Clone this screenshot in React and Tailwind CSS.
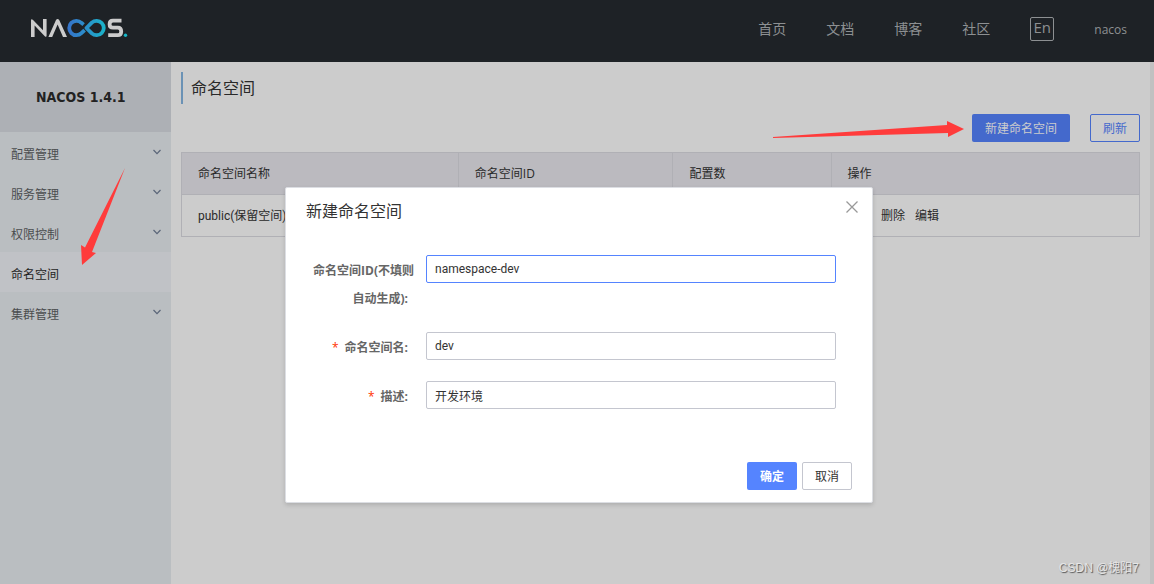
import React from "react";

const menu = [
  { label: "配置管理", expandable: true },
  { label: "服务管理", expandable: true },
  { label: "权限控制", expandable: true },
  { label: "命名空间", expandable: false },
  { label: "集群管理", expandable: true },
];

const fields = [
  { id: "ns-name", label: "命名空间名:", value: "dev" },
  { id: "ns-desc", label: "描述:", value: "开发环境" },
];

function Logo() {
  return (
    <svg viewBox="0 0 98 20" className="h-5 w-[98px]" fill="none" role="img" aria-label="NACOS">
      <defs>
        <linearGradient id="loop" x1="37" y1="0" x2="77" y2="0" gradientUnits="userSpaceOnUse">
          <stop offset="0" stopColor="#3672c9" />
          <stop offset="0.5" stopColor="#2a92cb" />
          <stop offset="1" stopColor="#18b7c8" />
        </linearGradient>
      </defs>
      <path fill="#cccccc" d="M1 19V2.4Q1 0.4 2.8 1.8L13 12.2V1H16.6V17.4Q16.6 19.6 14.8 18.2L4.6 7.6V19Z" />
      <path fill="#cccccc" d="M18.4 19L26 2Q27.6 0 29.2 2L37 19H33L27.6 6.4L22.2 19Z" />
      <path
        d="M91.5 2.7H83Q79.6 2.7 79.6 6.2Q79.6 9.6 83 9.6H87.8Q91.2 9.6 91.2 13.4Q91.2 17.2 87.8 17.2H78.2"
        stroke="#cccccc"
        strokeWidth="3.8"
      />
      <path
        d="M53.6 6.6L51.4 4.8A7.2 7.2 0 1 0 51.4 15.2L54.6 12.2M56.4 10L61.8 4.6A7.2 7.2 0 1 1 61.8 15.4Z"
        stroke="url(#loop)"
        strokeWidth="3.8"
        strokeLinejoin="round"
      />
      <circle cx="95.5" cy="17.3" r="1.7" fill="#18b7c8" />
    </svg>
  );
}

function Chevron() {
  return (
    <svg viewBox="0 0 8 6" className="h-1.5 w-2" fill="none" stroke="#5a6578" strokeWidth="1.2" aria-hidden="true">
      <path d="M0.5 1L4 4.6L7.5 1" />
    </svg>
  );
}

function Header() {
  return (
    <header className="flex h-[62px] items-center justify-between bg-[#1e2226] pr-[27px] pb-1 pl-[30px]">
      <a href="#home" className="pb-0.5">
        <Logo />
      </a>
      <nav className="flex items-center gap-10 text-sm leading-5 text-[#8d9092]">
        <a href="#index">首页</a>
        <a href="#docs">文档</a>
        <a href="#blog">博客</a>
        <a href="#community">社区</a>
        <button className="flex h-6 w-6 items-center justify-center rounded-xs border border-[#8d9092] pb-1 text-[15px] leading-5">
          En
        </button>
        <a href="#user" className="pt-0.5 text-xs">
          nacos
        </a>
      </nav>
    </header>
  );
}

function Sidebar() {
  return (
    <aside className="w-[171px] shrink-0 bg-[#babec1]">
      <h1 className="flex h-[70px] items-center bg-[#adb0b5] pl-9 font-['DejaVu_Sans_Condensed','DejaVu_Sans',sans-serif] text-sm font-bold text-[#222222]">
        NACOS 1.4.1
      </h1>
      <ul>
        {menu.map((item) => (
          <li key={item.label}>
            <a
              href="#menu"
              className={
                item.expandable
                  ? "flex h-10 items-center justify-between pt-1.5 pr-2.5 pl-[11px] text-[#4b4d4f]"
                  : "flex h-10 items-center bg-[#c0c2c6] pt-1.5 pr-2.5 pl-[11px] text-[#1f1f1f]"
              }
            >
              {item.label}
              {item.expandable && (
                <span className="pb-1.5">
                  <Chevron />
                </span>
              )}
            </a>
          </li>
        ))}
      </ul>
    </aside>
  );
}

function NamespacePage() {
  return (
    <main className="min-w-0 flex-1 pt-2.5 pr-2.5 pl-2.5 text-[#292929]">
      <h2 className="flex h-8 items-center border-l-2 border-[#6b92b5] pl-2 text-base">命名空间</h2>
      <div className="mt-2.5 mb-2.5 flex justify-end gap-5">
        <button className="h-7 rounded-xs bg-[#4469cc] px-[13px] pt-0.5 text-[#cccccc]">新建命名空间</button>
        <button className="h-7 rounded-xs border border-[#4469cc] px-3 pt-0.5 text-[#4469cc]">刷新</button>
      </div>
      <table className="w-full table-fixed border-collapse border border-[#b0b0b5] text-left">
        <colgroup>
          <col className="w-[28.9%]" />
          <col className="w-[22.4%]" />
          <col className="w-[16.5%]" />
          <col />
        </colgroup>
        <thead>
          <tr className="h-[42px] bg-[#bbbabf]">
            {["命名空间名称", "命名空间ID", "配置数", "操作"].map((title) => (
              <th key={title} className="border border-[#b0b0b5] px-4 font-normal">
                {title}
              </th>
            ))}
          </tr>
        </thead>
        <tbody>
          <tr className="h-[42px] font-[Roboto,'Noto_Sans_CJK_SC',sans-serif]">
            <td className="px-4">public(保留空间)</td>
            <td className="px-4" />
            <td className="px-4">0</td>
            <td className="px-4">
              <div className="flex gap-2.5">
                <a href="#detail">详情</a>
                <a href="#delete">删除</a>
                <a href="#edit">编辑</a>
              </div>
            </td>
          </tr>
        </tbody>
      </table>
    </main>
  );
}

function NamespaceDialog() {
  const labelClass = "w-[108px] shrink-0 pt-0.5 text-right leading-7 font-bold text-[#666666]";
  const inputClass =
    "h-7 min-w-0 flex-1 rounded-xs border bg-white px-2 font-[Roboto,'Noto_Sans_CJK_SC',sans-serif] text-[#333333] outline-none";
  return (
    <section
      role="dialog"
      aria-labelledby="dialog-title"
      className="absolute top-[187px] left-1/2 w-[588px] -translate-x-[292px] rounded-xs border border-[#dcdee3] bg-white shadow-[0_2px_4px_rgba(0,0,0,0.15)]"
    >
      <div className="flex items-center justify-between pt-[11px] pr-3.5 pl-5">
        <h2 id="dialog-title" className="text-base leading-6 text-[#333333]">
          新建命名空间
        </h2>
        <button aria-label="关闭" className="pb-2">
          <svg viewBox="0 0 12 12" className="h-3 w-3" stroke="#999999" strokeWidth="1.3" fill="none">
            <path d="M0.5 0.5L11.5 11.5M11.5 0.5L0.5 11.5" />
          </svg>
        </button>
      </div>
      <form className="flex flex-col gap-[21px] pt-8 pr-9 pl-5">
        <div className="flex h-14 items-start gap-3">
          <label htmlFor="ns-id" className={labelClass}>
            命名空间ID(不填则
            <br />
            <span className="pr-1.5">自动生成):</span>
          </label>
          <input id="ns-id" defaultValue="namespace-dev" className={`${inputClass} border-[#5584ff]`} />
        </div>
        {fields.map((field) => (
          <div key={field.id} className="flex h-7 items-start gap-3">
            <label htmlFor={field.id} className={`${labelClass} pr-1.5`}>
              <span className="mr-1.5 font-normal text-[#ff3000]">*</span>
              {field.label}
            </label>
            <input id={field.id} defaultValue={field.value} className={`${inputClass} border-[#c4c6cf]`} />
          </div>
        ))}
      </form>
      <footer className="flex justify-end gap-[5px] pt-[53px] pr-5 pb-3">
        <button className="h-7 rounded-xs bg-[#5584ff] px-[13px] pt-0.5 font-bold text-white">确定</button>
        <button className="h-7 rounded-xs border border-[#c4c6cf] bg-white px-3 pt-0.5 text-[#333333]">取消</button>
      </footer>
    </section>
  );
}

export default function App() {
  return (
    <div className="relative flex min-h-screen flex-col bg-[#cccccc] font-['Open_Sans','Noto_Sans_CJK_SC',sans-serif] text-xs">
      <Header />
      <div className="flex flex-1">
        <Sidebar />
        <NamespacePage />
        <div className="w-1 shrink-0 bg-[#c1c1c1]" />
      </div>
      <NamespaceDialog />
      <svg
        viewBox="0 0 44 98"
        className="absolute top-[168px] left-[81px] h-[98px] w-11"
        fill="#ff3b3b"
        aria-hidden="true"
      >
        <path d="M44 0L11 84L15 85L1 97L0 77L4 79.5Z" />
      </svg>
      <svg
        viewBox="0 0 192 18"
        className="absolute top-[120px] right-[190px] h-[18px] w-48"
        fill="#ff3b3b"
        aria-hidden="true"
      >
        <path d="M1 17L175 5V1L192 9L176 17V13L1 18Z" />
      </svg>
      <p className="absolute right-[15px] bottom-1.5 font-['Liberation_Sans','Noto_Sans_CJK_SC',sans-serif] text-xs leading-5 text-[#e6e6e6] [text-shadow:1px_1px_1px_#555555]">
        CSDN @槐阳7
      </p>
    </div>
  );
}
